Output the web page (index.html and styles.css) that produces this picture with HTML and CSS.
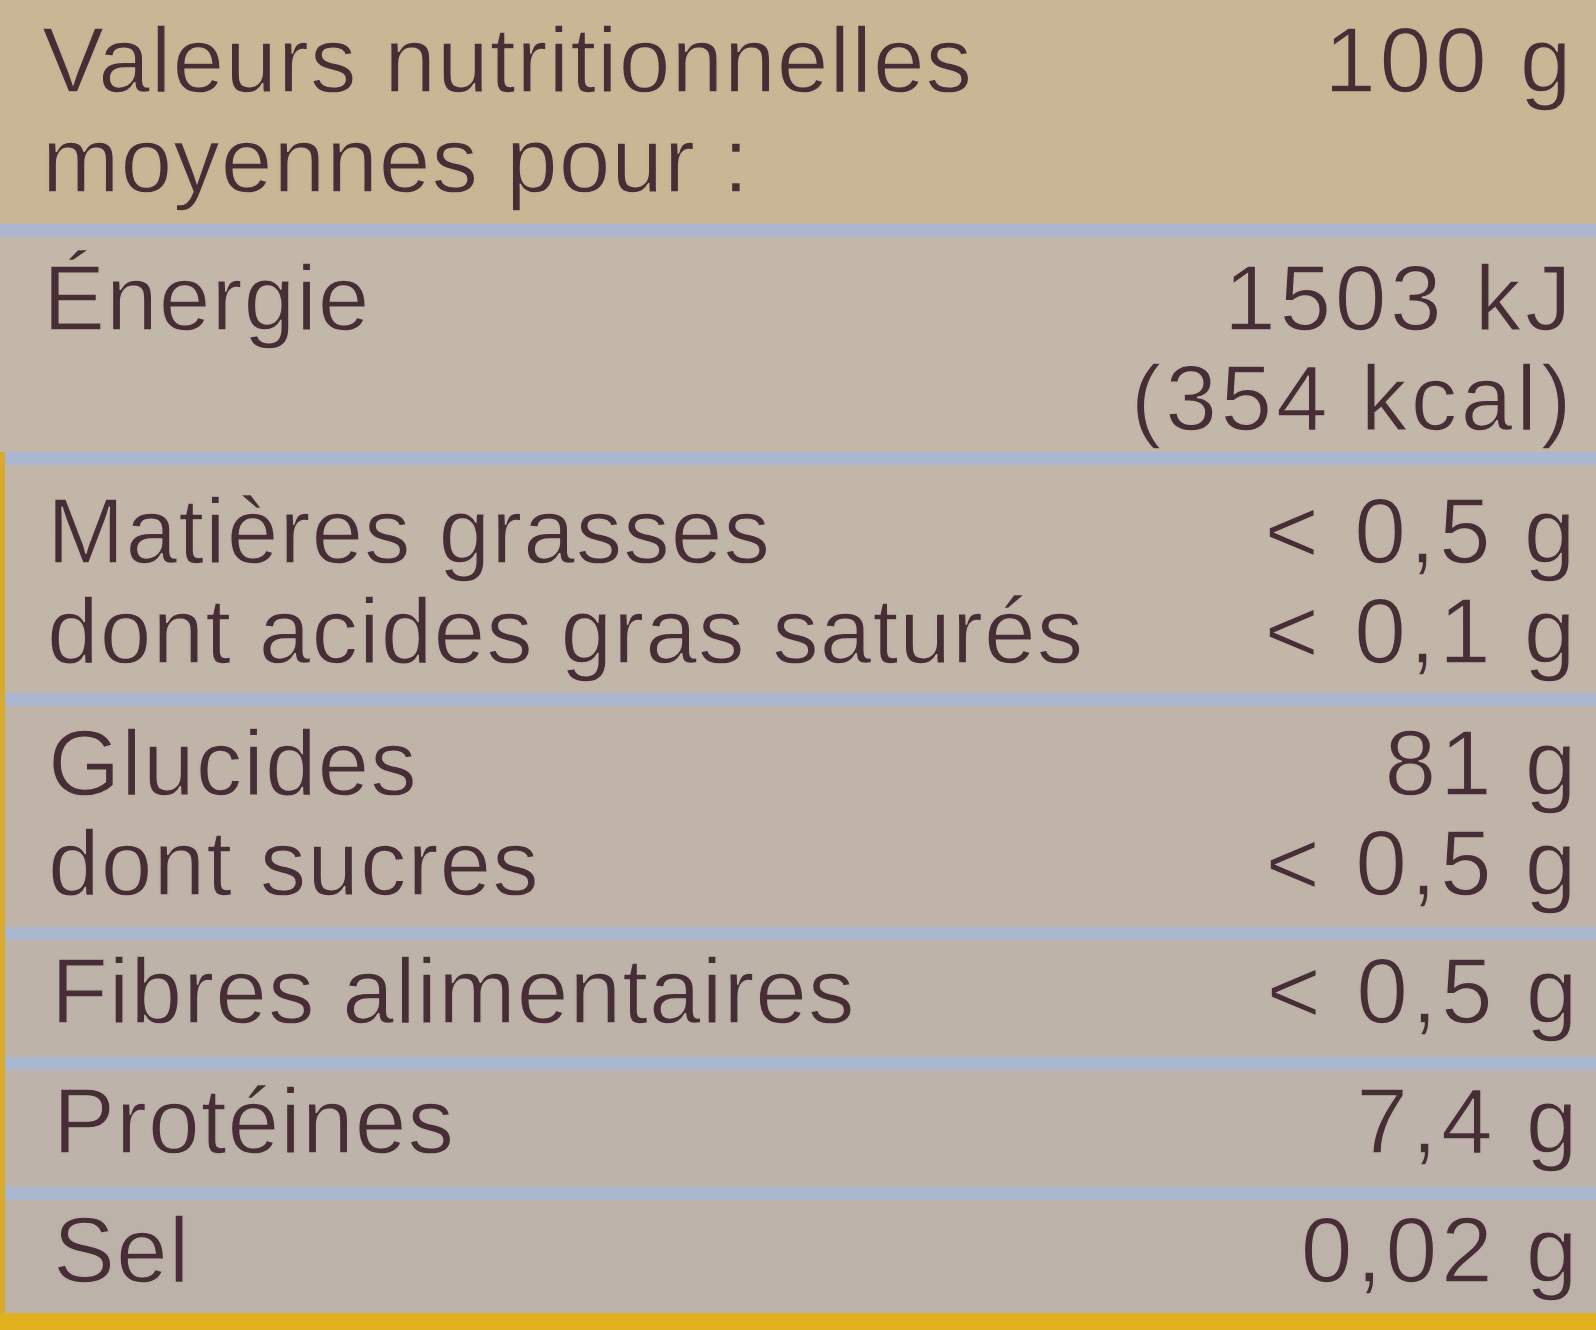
FILE: index.html
```html
<!DOCTYPE html>
<html lang="fr">
<head>
<meta charset="utf-8">
<title>Valeurs nutritionnelles</title>
<link rel="stylesheet" href="styles.css">
</head>
<body>
<main class="label">
  <section class="sec sec-head">
    <div class="name">Valeurs nutritionnelles<br>moyennes pour :</div>
    <div class="val">100 g</div>
  </section>
  <section class="sec sec-energy">
    <div class="name">Énergie</div>
    <div class="val">1503 kJ<br>(354 kcal)</div>
  </section>
  <div class="lower">
    <section class="sec sec-fat">
      <div class="name">Matières grasses</div>
      <div class="val"><span class="lt">&lt;</span> 0,5 g</div>
      <div class="name">dont acides gras saturés</div>
      <div class="val"><span class="lt">&lt;</span> 0,1 g</div>
    </section>
    <section class="sec sec-carb">
      <div class="name">Glucides</div>
      <div class="val">81 g</div>
      <div class="name">dont sucres</div>
      <div class="val"><span class="lt">&lt;</span> 0,5 g</div>
    </section>
    <section class="sec sec-fibre">
      <div class="name">Fibres alimentaires</div>
      <div class="val"><span class="lt">&lt;</span> 0,5 g</div>
    </section>
    <section class="sec sec-prot">
      <div class="name">Protéines</div>
      <div class="val">7,4 g</div>
    </section>
    <section class="sec sec-salt">
      <div class="name">Sel</div>
      <div class="val">0,02 g</div>
    </section>
  </div>
  <div class="band"></div>
</main>
</body>
</html>
```

FILE: styles.css
```css
html, body {
  margin: 0;
  padding: 0;
}

body {
  width: 1596px;
  height: 1330px;
  overflow: hidden;
  background: #c0b5aa;
  font-family: "Liberation Sans", Arial, sans-serif;
  color: #472d35;
}

.label {
  display: flex;
  flex-direction: column;
  width: 1596px;
  height: 1330px;
}

.sec {
  --bg: #c2b6a9;
  display: grid;
  grid-template-columns: 1fr auto;
  align-items: start;
  font-size: 93px;
  line-height: 100px;
  letter-spacing: 1px;
  background: var(--bg);
  -webkit-text-stroke: 1.4px var(--bg);
  text-shadow: 0 0 1px rgba(71, 45, 53, 0.35);
  border-top: 13px solid #abb7d1;
}

.val {
  text-align: right;
  letter-spacing: 3.6px;
}

.lt {
  letter-spacing: 6px;
}

.sec-head {
  --bg: #c9b695;
  border-top: 0;
  padding: 10px 21px 14px 42px;
}

.sec-energy {
  --bg: #c3b7a9;
  padding: 11px 21px 4px 43px;
}

.lower {
  display: flex;
  flex-direction: column;
  border-left: 5px solid #d8ab2c;
}

.sec-fat {
  --bg: #c2b6a9;
  padding: 16px 17px 12px 42px;
}

.sec-carb {
  --bg: #c0b4a8;
  padding: 7px 16px 14px 43px;
}

.sec-fibre {
  --bg: #beb3a9;
  padding: 1px 15px 16px 46px;
}

.sec-prot {
  --bg: #bdb3aa;
  padding: 1px 15px 16px 48px;
}

.sec-salt {
  --bg: #bcb2a9;
  padding: 0 15px 13px 48px;
}

.band {
  height: 17px;
  background: #e0b01f;
}
```
